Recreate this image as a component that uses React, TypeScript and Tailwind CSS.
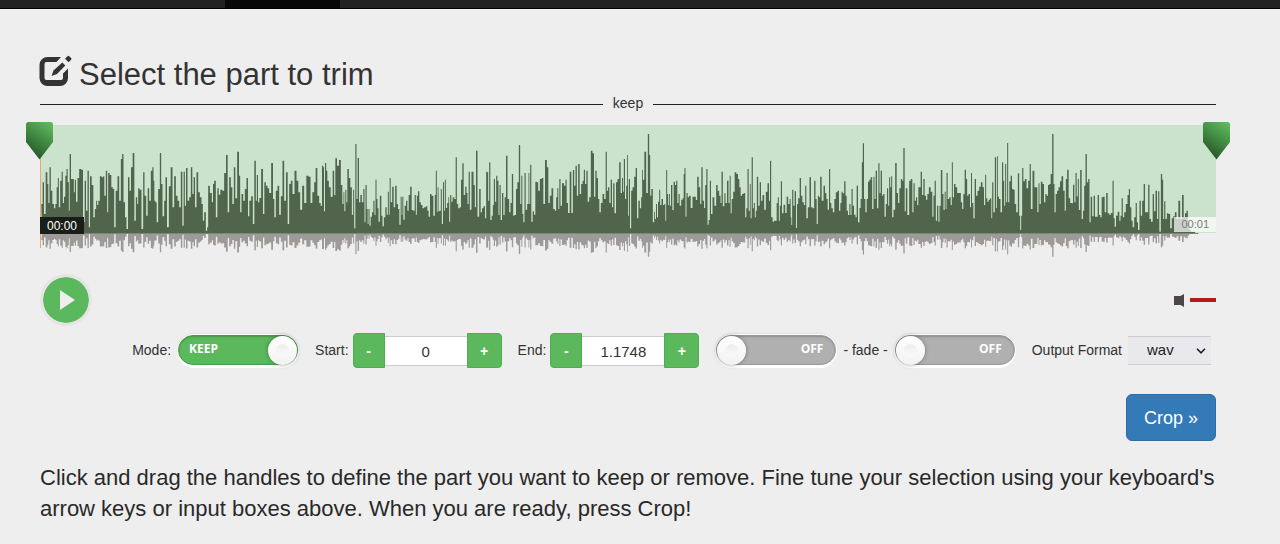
import { useState } from 'react';

// Peaks as "position:depth" pairs in thirds of a pixel; the depth is measured from the top of the scale.
const SEGMENTS = [
  {
    start: -60,
    peaks:
      '66:265 70:200 74:295 80:170 84:205 86:262 91:155 94:225 100:265 104:278 108:265 112:215 115:187 118:275 123:195 127:168 130:262 134:243 138:180 141:160 145:200 148:285 150:115 156:190 160:190 163:230 166:192 170:258 175:187 180:160 186:162 192:320 196:195 200:285 205:165 208:335 212:182 218:208 222:305 227:280 230:255 233:268 237:255 242:182 248:185 251:182 255:240 260:165 263:290 266:172 272:178 276:215 281:220 284:335 290:225 295:182 300:255 305:130 308:115 313:260 317:305 322:340 326:185 331:225 335:155 341:112 345:315 350:245 353:265 356:218 361:222 368:340 371:170 376:240 381:300 385:218 390:255 395:165 399:155 402:195 404:255 408:260 412:320 417:220 422:112 425:205 430:302 435:255 438:185 444:335 449:212 455:155 460:275 465:182 470:240 475:255 480:275 485:168 489:330 493:168 496:270 500:157 505:255 510:245 515:155 519:235 523:185 527:275 532:170 537:230 542:245 547:265 550:315 555:290 560:345 563:335 566:210 573:232 578:260 580:205 585:195 590:305 594:218 598:237 604:222 610:225 615:172 621:118 625:290 630:185 635:215 639:265 644:155 648:248 655:108 659:180 662:290 667:235 672:255 677:220 682:187 686:302 690:255 697:242 700:325 706:135 709:255 712:178 716:260 720:247 727:160 731:295 735:200 740:210 745:218 750:232 757:142 761:250 765:305 770:225 775:210 780:297 785:242 790:135 795:255 801:170 805:325 810:205 815:195 820:235 827:165 832:195 838:230 843:282 850:210 855:262 863:180 869:183 874:262 880:230 885:200 889:157 895:240',
  },
  {
    start: 840,
    peaks:
      '0:262 4:270 8:150 11:155 13:287 17:142 20:165 24:195 29:215 35:243 41:165 44:238 48:128 54:150 60:133 65:208 69:265 72:230 74:287 78:222 80:260 84:160 89:187 93:215 98:297 101:222 104:338 108:85 111:250 115:127 119:260 123:238 128:260 132:220 135:320 138:208 142:280 144:325 147:280 150:330 154:303 158:290 162:255 165:298 168:192 171:250 174:278 177:318 182:240 186:300 189:332 194:305 198:275 202:297 205:228 208:297 210:187 214:260 219:213 223:275 228:210 232:265 236:280 240:327 244:243 246:298 248:243 252:312 256:270 260:255 264:285 268:238 273:213 277:283 282:285 286:238 289:297 292:240 296:227 300:260 305:268 310:278 315:275 320:272 324:285 328:303 332:235 337:240 343:300 346:238 349:165 352:288 354:215 357:287 361:285 364:220 367:325 371:200 373:285 376:192 379:277 384:262 386:245 389:318 392:238 396:258 400:245 405:250 409:125 412:265 417:278 421:275 425:192 429:143 433:238 438:213 441:232 444:265 448:168 451:282 458:168 463:208 466:275 470:105 475:303 480:220 484:290 488:278 493:272 497:308 500:168 503:170 506:255 509:140 513:313 517:300 520:268 523:190 527:258 530:180 534:195 537:298 540:208 544:313 548:232 552:298 556:245 560:120 565:250 570:290 573:262 578:175 581:300 586:298 590:220 594:200 599:88 602:265 606:180 608:295 612:320 615:172 619:282 624:265 627:172 629:265 632:147 636:318 640:287 644:297 648:198 652:200 657:225 662:190 668:187 672:265 678:133 683:155 687:262 692:240 697:218 702:280 707:285 710:245 714:218 716:280 720:190 723:270 729:203 735:210 738:192 742:262 746:292 752:168 756:292 761:163 764:210 769:150 772:240 777:145 781:235 786:205 790:195 793:162 797:205 801:165 805:258 810:245 815:105 820:113 824:243 828:165 832:187 836:250 840:290 845:262 850:235 855:250 859:108 862:225 866:215 870:262 874:192 878:275 881:203 886:293 890:200 895:190',
  },
  {
    start: 1740,
    peaks:
      '0:140 4:232 8:187 10:228 13:130 17:250 20:210 23:118 25:300 28:190 32:338 35:225 40:215 45:183 49:157 53:308 57:255 62:278 65:245 68:163 70:192 76:108 81:232 86:55 89:118 92:240 96:220 101:320 104:288 106:310 110:265 112:305 116:258 119:222 122:268 127:250 131:268 135:265 137:315 140:163 143:235 145:268 148:235 151:270 155:208 159:283 163:198 167:208 170:195 174:262 177:235 181:270 186:252 190:248 192:175 195:157 198:303 201:232 205:245 209:240 215:277 220:243 225:243 230:253 233:183 239:215 242:265 246:155 250:255 254:277 257:208 261:160 264:327 268:313 271:195 275:295 280:245 286:270 291:208 295:225 300:240 303:262 306:168 311:272 315:233 318:262 324:195 327:262 331:180 333:293 337:250 342:228 346:170 352:175 356:190 360:215 364:240 368:235 374:232 377:305 381:278 384:160 388:285 391:205 393:308 397:125 400:278 403:262 406:305 409:285 412:183 417:270 421:200 425:255 430:238 435:282 440:228 445:203 449:255 451:135 456:305 460:318 464:315 468:315 472:262 475:245 478:315 481:270 484:197 488:293 493:267 498:292 502:243 507:265 511:250 513:305 515:328 518:222 522:270 526:227 530:337 532:265 537:248 541:187 545:240 549:260 554:268 557:210 561:308 566:275 571:185 575:275 580:278 585:195 588:250 592:325 595:240 599:245 602:183 608:255 613:210 617:232 621:250 625:282 629:160 632:262 636:278 641:290 645:250 650:230 655:225 659:285 663:262 666:228 670:233 675:197 678:240 682:285 686:298 690:265 693:298 696:220 700:270 704:297 709:305 711:210 717:320 720:277 724:250 727:140 730:83 734:250 738:290 742:250 746:198 750:192 754:185 759:280 762:183 765:250 769:165 773:278 777:143 780:233 784:165 788:240 791:235 796:303 799:265 803:218 806:270 809:185 812:215 815:182 818:305 823:282 828:142 832:232 836:262 840:218 845:190 848:195 852:97 856:287 859:218 865:298 870:195 875:190 879:290 882:203 886:255 890:245 893:268 897:215',
  },
  {
    start: 2640,
    peaks:
      '0:215 4:168 8:238 12:190 16:240 20:252 24:235 29:215 35:228 39:303 42:240 46:195 49:315 53:270 57:318 60:270 65:163 69:235 72:283 76:228 78:280 81:172 85:250 90:245 94:268 97:140 100:245 104:205 109:215 114:232 120:232 125:260 128:280 132:235 136:162 140:190 143:240 148:235 152:275 154:172 158:262 162:308 166:190 170:240 175:225 180:213 185:200 190:215 194:268 197:177 200:248 204:258 208:252 213:248 215:308 218:200 222:290 227:125 230:277 232:122 235:243 239:250 244:290 248:140 251:195 254:270 257:145 260:260 263:82 266:260 270:197 274:180 278:220 282:222 286:265 291:290 296:173 299:300 302:343 305:300 308:157 312:197 317:190 322:218 327:195 331:145 334:280 341:165 345:215 350:215 354:290 357:203 360:265 365:198 370:205 374:260 378:235 382:240 386:208 390:205 394:175 399:55 402:205 405:290 409:235 413:225 418:215 422:197 427:182 432:225 436:285 439:190 444:162 448:248 453:262 457:263 461:207 465:260 468:172 472:242 475:190 478:283 483:163 487:310 491:285 494:210 499:115 502:200 507:190 510:320 514:243 519:302 523:240 527:303 531:303 535:238 539:298 543:305 547:245 552:243 556:290 561:232 565:293 570:297 575:292 580:195 582:308 586:333 590:300 596:288 600:315 603:300 607:248 610:305 615:290 620:265 625:238 628:220 632:275 636:315 640:335 645:305 649:262 652:320 656:343 661:255 664:300 669:255 673:205 677:290 682:290 687:207 690:310 696:318 700:235 704:287 709:225 713:310 716:227 720:348 725:175 728:192 731:310 734:257 738:310 743:293 748:295 753:338 758:308 762:302 767:290 772:310 778:255 783:310 789:238 793:305 797:293 802:285 805:320 810:342 815:348 835:352',
  },
];

const BASE = 352;
const BARS = SEGMENTS.flatMap(({ start, peaks }) =>
  peaks.split(' ').map((pair) => {
    const [x, depth] = pair.split(':').map(Number);
    return { x: x + start, h: BASE - depth };
  }),
);

function stepPath(base: number, scale: number) {
  let d = `M${BARS[0].x} ${base}`;
  BARS.forEach(({ x, h }, i) => {
    const left = i === 0 ? x - 2 : (BARS[i - 1].x + x) / 2;
    const right = i === BARS.length - 1 ? x : (BARS[i + 1].x + x) / 2;
    d += `L${left} ${base + h * scale}L${right} ${base + h * scale}`;
  });
  return `${d}L${BARS[BARS.length - 1].x} ${base}Z`;
}

const WAVE = stepPath(324, -1);
const REFLECTION = stepPath(324, 0.24);

function Handle({ id }: { id: string }) {
  return (
    <svg viewBox="0 0 27 38" className="block h-[38px] w-[27px]" aria-hidden="true">
      <defs>
        <linearGradient id={id} x1="0.75" y1="0" x2="0.3" y2="0.9">
          <stop offset="0" stopColor="#5cb85c" />
          <stop offset="1" stopColor="#275a29" />
        </linearGradient>
      </defs>
      <path d="M2.5 0h22A2.5 2.5 0 0 1 27 2.5V20L13.5 37.5 0 20V2.5A2.5 2.5 0 0 1 2.5 0Z" fill={`url(#${id})`} />
    </svg>
  );
}

function Waveform() {
  return (
    <div className="relative mt-3">
      <svg viewBox="0 0 3528 396" preserveAspectRatio="none" className="block h-[132px] w-full" aria-label="Waveform">
        <rect width="3528" height="324" fill="#cbe2cc" />
        <path d={REFLECTION} fill="#9e9a98" />
        <path d={WAVE} fill="#51644c" />
        <rect y="324" width="3475" height="3" fill="#7f857a" />
      </svg>
      <div className="absolute top-8 left-0 h-[91px] w-px bg-[#eba673]" />
      <span className="absolute top-[92px] left-0 h-[17px] bg-[#191f18] px-[7px] text-[12px] leading-[18px] text-white">
        00:00
      </span>
      <span className="absolute top-[92px] right-0 h-[15px] bg-white/70 px-[7px] text-[11px] leading-[15px] text-[#7a7a7a]">
        00:01
      </span>
      <button type="button" aria-label="Start handle" className="absolute -top-[3px] -left-[14px]">
        <Handle id="handle-start" />
      </button>
      <button type="button" aria-label="End handle" className="absolute -top-[3px] -right-[14px]">
        <Handle id="handle-end" />
      </button>
    </div>
  );
}

function Toggle({ label, on, off, initial }: { label: string; on: string; off: string; initial: boolean }) {
  const [checked, setChecked] = useState(initial);
  return (
    <span className="relative inline-flex h-[34px] w-[122px] rounded-full bg-white p-px pb-[3px] shadow-[0_-1px_1px_#e2e2e2]">
      <input
        type="checkbox"
        aria-label={label}
        checked={checked}
        onChange={(e) => setChecked(e.target.checked)}
        className="h-[30px] w-full appearance-none rounded-full border border-[#999] bg-[#b0b0b0] shadow-[inset_0_1px_2px_rgba(0,0,0,0.2)] checked:border-[#459d45] checked:bg-[#5cb85c]"
      />
      <span
        className={`pointer-events-none absolute top-[7px] font-['Open_Sans',sans-serif] text-[12px] leading-[15px] font-bold text-white ${checked ? 'left-[12px]' : 'right-[14px]'}`}
      >
        {checked ? on : off}
      </span>
      <span
        className={`pointer-events-none absolute top-[2px] flex size-[29px] items-center justify-center rounded-full bg-linear-to-b from-white to-[#f2f2f2] shadow-[0_0_4px_rgba(0,0,0,0.35)] ${checked ? 'right-[2px]' : 'left-[2px]'}`}
      >
        <span className="size-[13px] rounded-full bg-linear-to-b from-[#ededed] to-[#fafafa]" />
      </span>
    </span>
  );
}

function Stepper({ id, label, initial }: { id: string; label: string; initial: string }) {
  const [value, setValue] = useState(initial);
  const step = (delta: number) => setValue(String(Math.max(0, Number((Number(value) + delta).toFixed(4)))));
  return (
    <div className="flex items-center gap-1">
      <label htmlFor={id} className="pb-0.5">
        {label}
      </label>
      <div className="flex items-center">
        <button
          type="button"
          onClick={() => step(-0.1)}
          className="h-[35px] w-8 rounded-l-[4px] border border-[#4cae4c] bg-[#5cb85c] text-[14px] font-bold text-white"
        >
          -
        </button>
        <input
          id={id}
          value={value}
          onChange={(e) => setValue(e.target.value)}
          className="mt-px h-[30px] w-[82px] border-y border-[#ccc] bg-white text-center text-[15px] text-[#333] outline-none"
        />
        <button
          type="button"
          onClick={() => step(0.1)}
          className="h-[35px] w-[35px] rounded-r-[4px] border border-[#4cae4c] bg-[#5cb85c] text-[14px] font-bold text-white"
        >
          +
        </button>
      </div>
    </div>
  );
}

export default function App() {
  return (
    <div className="min-h-screen bg-[#eee] font-['Liberation_Sans',Arial,sans-serif] text-[14px] leading-5 text-[#333]">
      <nav className="flex h-[9px] border-b border-black bg-[#222]">
        <div className="ml-[225px] w-[115px] bg-[#080808]" />
      </nav>
      <main className="pr-16 pl-10">
        <h1 className="flex h-[84px] items-end gap-[7px] text-[31px] leading-9">
          <svg viewBox="0 0 33 32" className="mb-1.5 -ml-px h-8 w-[33px]" fill="#333" aria-hidden="true">
            <path d="M8.500 2H22l-4.500 5H7.500a2 2 0 0 0-2 2v14a2 2 0 0 0 2 2H22a2 2 0 0 0 2-2v-4.500l5-5V23a8 8 0 0 1-8 8H8.500a8 8 0 0 1-8-8V10a8 8 0 0 1 8-8Z" />
            <path d="M23.300 7.500l3 3-8.300 8.500-5.500 2 2-5.500Z" />
            <path d="M28.500 1.200a1.200 1.200 0 0 1 1.700 0l1.900 1.900a1.200 1.200 0 0 1 0 1.700l-2.500 2.500-3.600-3.600Z" />
          </svg>
          Select the part to trim
        </h1>
        <div className="flex items-center gap-[10px]">
          <div className="h-px flex-1 bg-[#222]" />
          <span className="pb-0.5">keep</span>
          <div className="h-px flex-1 bg-[#222]" />
        </div>
        <div className="-mt-0.5">
          <Waveform />
        </div>
        <div className="mt-[17px] flex items-center justify-between">
          <button
            type="button"
            aria-label="Play"
            className="flex size-[52px] items-center justify-center rounded-full border-3 border-[#e5e5e5] bg-[#5cb85c] bg-clip-padding"
          >
            <svg viewBox="0 0 15 20" className="ml-[3px] h-5 w-[15px]" fill="#eee" aria-hidden="true">
              <path d="M0 0l15 10-15 10Z" />
            </svg>
          </button>
          <div className="flex items-center gap-[6px]">
            <svg viewBox="0 0 10 13" className="h-[13px] w-[10px]" fill="#4d4646" aria-hidden="true">
              <path d="M0 2h6.500L10 0v13l-3.500-2H0Z" />
            </svg>
            <input
              type="range"
              aria-label="Volume"
              defaultValue={100}
              className="h-1 w-[26px] appearance-none bg-[#b31b1b] [&::-webkit-slider-thumb]:size-0 [&::-webkit-slider-thumb]:appearance-none"
            />
          </div>
        </div>
        <div className="mt-[7px] flex flex-wrap items-center justify-end gap-x-4 gap-y-3 pr-[5px]">
          <div className="flex items-center gap-[6px]">
            <span className="pb-0.5">Mode:</span>
            <Toggle label="Mode" on="KEEP" off="REMOVE" initial={true} />
          </div>
          <Stepper id="start" label="Start:" initial="0" />
          <Stepper id="end" label="End:" initial="1.1748" />
          <div className="flex items-center gap-[6px]">
            <Toggle label="Fade in" on="ON" off="OFF" initial={false} />
            <span className="pb-0.5">- fade -</span>
            <Toggle label="Fade out" on="ON" off="OFF" initial={false} />
          </div>
          <div className="flex items-center gap-[6px]">
            <label htmlFor="format" className="pb-0.5">
              Output Format
            </label>
            <div className="relative">
              <select
                id="format"
                defaultValue="wav"
                className="block h-[29px] w-[83px] appearance-none border-y border-[#ccc] bg-[#e9e9ed] pb-0.5 pl-[19px] text-[15px] text-[#222]"
              >
                <option>wav</option>
                <option>mp3</option>
                <option>ogg</option>
              </select>
              <svg
                viewBox="0 0 10 6"
                className="pointer-events-none absolute top-3 right-[5px] h-[6px] w-[10px]"
                fill="none"
                stroke="#222"
                strokeWidth="1.6"
                aria-hidden="true"
              >
                <path d="M1 .8l4 4 4-4" />
              </svg>
            </div>
          </div>
        </div>
        <div className="mt-[26px] flex justify-end">
          <button
            type="button"
            className="h-[47px] rounded-[6px] border border-[#2e6da4] bg-[#337ab7] px-[17px] text-[18px] text-white"
          >
            Crop »
          </button>
        </div>
        <p className="mt-[21px] text-[22px] leading-[31px] text-[#292929]">
          Click and drag the handles to define the part you want to keep or remove. Fine tune your selection using your
          keyboard's arrow keys or input boxes above. When you are ready, press Crop!
        </p>
      </main>
    </div>
  );
}
